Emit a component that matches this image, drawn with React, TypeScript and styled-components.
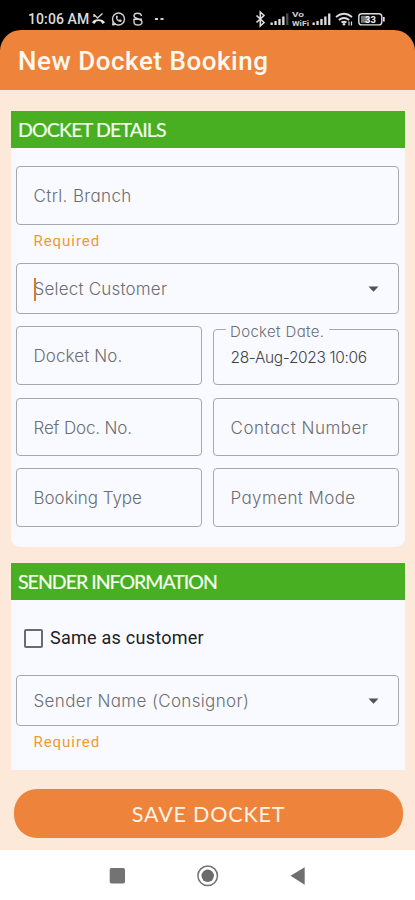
import React from "react";
import styled, { createGlobalStyle } from "styled-components";

const GlobalStyle = createGlobalStyle`
  *, *::before, *::after { box-sizing: border-box; }
  body { margin: 0; background: #000; }
`;

const geometric = `"Inter", "Lato", sans-serif`;

const Screen = styled.div`
  width: 415px;
  height: 900px;
  overflow: hidden;
  display: flex;
  flex-direction: column;
  background: #000;
  font-family: ${geometric};
`;

const StatusBar = styled.div`
  height: 30px;
  flex: none;
  padding: 8px 29px 0 28px;
  display: flex;
  justify-content: space-between;
  color: #dcdcdc;
`;

const StatusGroup = styled.div`
  display: flex;
  align-items: center;
  height: 22px;
`;

const Clock = styled.span<{ $ls: number }>`
  font: 500 14px/22px Roboto, sans-serif;
  letter-spacing: ${(p) => p.$ls}px;
  white-space: nowrap;
  width: 62px;
`;

const AppBar = styled.header`
  height: 60px;
  flex: none;
  display: flex;
  align-items: center;
  padding: 2px 18px 0;
  border-radius: 21px 21px 0 0;
  background: #ee843b;
`;

const Title = styled.h1<{ $ls: number }>`
  margin: 0;
  font: 500 26px/32px Roboto, sans-serif;
  letter-spacing: ${(p) => p.$ls}px;
  color: #fff8ef;
  white-space: nowrap;
`;

const Content = styled.main`
  height: 760px;
  flex: none;
  padding: 21px 10px 0 11px;
  background: #fce9da;
  display: flex;
  flex-direction: column;
`;

const Card = styled.section<{ $h: number; $round?: boolean }>`
  height: ${(p) => p.$h}px;
  flex: none;
  background: #f9faff;
  border-radius: ${(p) => (p.$round ? "0 0 9px 9px" : "0")};
  & + & { margin-top: 16px; }
`;

const CardHeader = styled.h2<{ $ls: number }>`
  margin: 0;
  height: 37px;
  padding-left: 7px;
  font: 400 19.5px/37px "Lato", sans-serif;
  letter-spacing: ${(p) => p.$ls}px;
  color: #f6fff0;
  background: #47af21;
  -webkit-text-stroke: 0.2px #f6fff0;
  white-space: nowrap;
`;

const Fields = styled.div<{ $top: number }>`
  padding: ${(p) => p.$top}px 6px 0 5px;
`;

const Row = styled.div<{ $gap: number }>`
  display: grid;
  grid-template-columns: 1fr 1fr;
  column-gap: 11px;
  align-items: end;
  margin-top: ${(p) => p.$gap}px;
`;

const Field = styled.div<{ $h: number }>`
  position: relative;
  height: ${(p) => p.$h}px;
  border: 1.5px solid #a6a8ac;
  border-radius: 4px;
  padding: 1px 19px 0 16.5px;
  display: flex;
  align-items: center;
  justify-content: space-between;
`;

const FieldText = styled.span<{ $ls?: number; $value?: boolean }>`
  font-family: ${geometric};
  font-feature-settings: "cv11";
  font-size: ${(p) => (p.$value ? 15.5 : 17)}px;
  font-weight: 300;
  line-height: 24px;
  letter-spacing: ${(p) => p.$ls ?? 0}px;
  color: ${(p) => (p.$value ? "#424448" : "#6c6e72")};
  white-space: nowrap;
`;

const FloatingLabel = styled.span<{ $ls: number }>`
  position: absolute;
  left: 12px;
  top: -7.5px;
  width: 103px;
  padding-left: 4px;
  background: #f9faff;
  font-size: 15px;
  font-weight: 300;
  line-height: 18px;
  font-feature-settings: "cv11";
  letter-spacing: ${(p) => p.$ls}px;
  color: #6c6e72;
  white-space: nowrap;
`;

const Caret = styled.span`
  position: absolute;
  left: 16.5px;
  top: 14px;
  width: 2px;
  height: 23px;
  background: #e07b20;
`;

const Helper = styled.div<{ $ls: number; $h: number }>`
  height: ${(p) => p.$h}px;
  padding: 6px 0 0 17.5px;
  font: 400 15px/20px Roboto, sans-serif;
  letter-spacing: ${(p) => p.$ls}px;
  color: #ec9a32;
`;

const CheckRow = styled.label`
  display: flex;
  align-items: center;
  height: 20px;
  padding-left: 8px;
  margin-bottom: 27px;
`;

const Box = styled.span`
  width: 19px;
  height: 19px;
  border: 2px solid #6a6b6e;
  border-radius: 2px;
  margin-right: 7px;
`;

const CheckText = styled.span<{ $ls: number }>`
  font: 400 18px/20px Roboto, sans-serif;
  letter-spacing: ${(p) => p.$ls}px;
  color: #202124;
  white-space: nowrap;
`;

const SaveButton = styled.button<{ $ls: number }>`
  width: 389px;
  height: 49px;
  margin: 18.5px 0 0 2.5px;
  padding: 1px 0 0 1px;
  border: 0;
  border-radius: 23px;
  background: #ee843b;
  color: #fff4e6;
  font: 400 21.5px/30px "Lato", sans-serif;
  letter-spacing: ${(p) => p.$ls}px;
  white-space: nowrap;
`;

const NavBar = styled.nav`
  height: 50px;
  flex: none;
  background: #fff;
  display: flex;
  align-items: center;
  padding: 1px 0 0 109px;
`;

const StatusIcons = () => (
  <svg width="80" height="22" viewBox="0 0 80 22" fill="none" stroke="#d2d2d2" strokeWidth="1.4">
    <path d="M4 6.500l3.500 3.500 5-4.500M4 6v3" />
    <path d="M2 14.500c1-4.500 11.500-4.500 13 0l-2.500 1.500-1.700-2.500q-2.500-1-4.600 0l-1.700 2.500z" fill="#e4e4e4" stroke="none" />
    <circle cx="28.500" cy="11" r="6" />
    <path d="M22.500 17l1-3.500M22.500 17l3.500-1" />
    <path d="M26 8c-.8 3.500 2.500 6.500 5.300 5.800l.5-1.500-1.800-1-1 .8q-1.500-.7-1.800-2l.8-.9-.8-1.600z" fill="#d2d2d2" stroke="none" />
    <path d="M51.500 8c-.5-3.700-7.500-3.700-7.500 0 0 3 8 2.500 8 6 0 4-8 4-8 0v-2.700h8" strokeWidth="1.400" />
    <path d="M65 11h3M70.500 11h3" strokeWidth="1.800" />
  </svg>
);

const Bars = ({ x, faint }: { x: number; faint?: boolean }) => (
  <g fill="#dedede">
    {[2.5, 4, 6, 8.5, 11.5].map((h, i) => (
      <rect key={i} x={x + i * 3.9} y={17 - h} width="2.300" height={h} opacity={faint && i === 4 ? 0.35 : 1} />
    ))}
  </g>
);

const SystemIcons = () => (
  <svg width="132" height="22" viewBox="0 0 132 22" fill="none" stroke="#dedede">
    <path d="M2.500 7.500l7.500 7L6.300 18V4l3.700 3.500-7.500 7" strokeWidth="1.600" />
    <g stroke="none">
      <Bars x={16.5} faint />
      <Bars x={58.500} />
      <g fill="#d0d0d0" fontFamily="Roboto, sans-serif" fontWeight="700">
        <text x="38" y="9" fontSize="7.500" textLength="12" lengthAdjust="spacingAndGlyphs">Vo</text>
        <text x="38" y="18" fontSize="7.500" textLength="17" lengthAdjust="spacingAndGlyphs">WiFi</text>
      </g>
    </g>
    <path d="M82 9q8-6.500 16 0M84.800 12q5.200-4 10.400 0M87.500 14.600q2.500-1.800 5 0" strokeWidth="1.900" />
    <circle cx="90" cy="16.300" r="1.300" fill="#dedede" stroke="none" />
    <path d="M95 13.500v4M97.500 13.500v4" strokeWidth="1.200" />
    <rect x="104.800" y="5.700" width="23" height="11.200" rx="3" strokeWidth="1.400" />
    <path d="M129.800 9v4.500" strokeWidth="1.800" />
    <rect x="107" y="7.800" width="8" height="7" fill="#777" stroke="none" />
    <text x="111" y="14.600" fontSize="9.500" fontWeight="700" fontFamily="Roboto, sans-serif" fill="#eee" stroke="none">33</text>
  </svg>
);

const Chevron = () => (
  <svg width="11" height="6" viewBox="0 0 11 6">
    <path d="M.5.500h10L5.500 5.700z" fill="#505154" />
  </svg>
);

const NavIcons = () => (
  <svg width="198" height="24" viewBox="0 0 198 24">
    <rect x=".7" y="4" width="15.300" height="15.500" rx="1.800" fill="#737373" />
    <circle cx="98.700" cy="11.800" r="9.800" fill="none" stroke="#747474" strokeWidth="1.500" />
    <circle cx="98.700" cy="11.800" r="6.200" fill="#6b6b6b" />
    <path d="M195.700 3.200v17.600L181.500 11.800z" fill="#6f6f6f" />
  </svg>
);

const TextField = ({ label, ls, h = 59 }: { label: string; ls: number; h?: number }) => (
  <Field $h={h}>
    <FieldText $ls={ls}>{label}</FieldText>
  </Field>
);

const SelectField = ({ label, ls, active }: { label: string; ls: number; active?: boolean }) => (
  <Field $h={51}>
    <FieldText $ls={ls}>{label}</FieldText>
    {active && <Caret />}
    <Chevron />
  </Field>
);

export default function App() {
  return (
    <Screen>
      <GlobalStyle />
      <StatusBar>
        <StatusGroup>
          <Clock $ls={0.1}>10:06 AM</Clock>
          <StatusIcons />
        </StatusGroup>
        <StatusGroup>
          <SystemIcons />
        </StatusGroup>
      </StatusBar>
      <AppBar>
        <Title $ls={0.52}>New Docket Booking</Title>
      </AppBar>
      <Content>
        <Card $h={436} $round>
          <CardHeader $ls={-0.8}>DOCKET DETAILS</CardHeader>
          <Fields $top={18}>
            <TextField label="Ctrl. Branch" ls={0.35} />
            <Helper $ls={0.95} $h={38}>Required</Helper>
            <SelectField label="Select Customer" ls={0.2} active />
            <Row $gap={12}>
              <TextField label="Docket No." ls={0.1} />
              <Field $h={56}>
                <FloatingLabel $ls={0.35}>Docket Date.</FloatingLabel>
                <FieldText $value $ls={-0.35}>28-Aug-2023 10:06</FieldText>
              </Field>
            </Row>
            <Row $gap={13}>
              <TextField label="Ref Doc. No." ls={-0.15} h={58} />
              <TextField label="Contact Number" ls={0.5} h={58} />
            </Row>
            <Row $gap={12}>
              <TextField label="Booking Type" ls={0} />
              <TextField label="Payment Mode" ls={0.4} />
            </Row>
          </Fields>
        </Card>
        <Card $h={207}>
          <CardHeader $ls={-0.98}>SENDER INFORMATION</CardHeader>
          <Fields $top={28}>
            <CheckRow>
              <Box />
              <CheckText $ls={0.25}>Same as customer</CheckText>
            </CheckRow>
            <SelectField label="Sender Name (Consignor)" ls={0.35} />
            <Helper $ls={0.95} $h={38}>Required</Helper>
          </Fields>
        </Card>
        <SaveButton $ls={0.8}>SAVE DOCKET</SaveButton>
      </Content>
      <NavBar>
        <NavIcons />
      </NavBar>
    </Screen>
  );
}
